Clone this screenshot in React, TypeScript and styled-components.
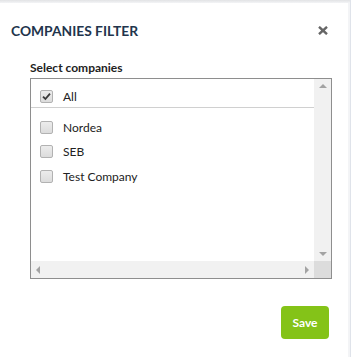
import React, { useState } from 'react'
import styled, { createGlobalStyle } from 'styled-components'

const GlobalStyle = createGlobalStyle`
  html, body {
    margin: 0;
    padding: 0;
    background: #eef0f3;
    font-family: Lato, "Open Sans", Arial, sans-serif;
  }
`

const Page = styled.div`
  width: 351px;
  height: 357px;
  display: flex;
  background: linear-gradient(to bottom, #e2e3e5 0px, #f3f4f6 3px, #f3f4f6 100%);
  border-right: 1px solid #dfe3ea;
  box-sizing: border-box;
  overflow: hidden;
`

const Modal = styled.div`
  width: 348px;
  margin-top: 3px;
  background: #fff;
  box-sizing: border-box;
  display: flex;
  flex-direction: column;
`

const Header = styled.div`
  display: flex;
  align-items: center;
  justify-content: space-between;
  height: 55px;
  padding: 0 20px 0 11px;
`

const Title = styled.h4`
  margin: 0;
  font-size: 13.8px;
  font-weight: 700;
  color: #22344c;
`

const Close = styled.button`
  border: 0;
  background: none;
  padding: 0;
  display: flex;
  cursor: pointer;
`

const Body = styled.div`
  padding: 2px 0 0 30px;
`

const Label = styled.div`
  font-size: 12px;
  font-weight: 700;
  color: #222;
  margin-bottom: 3px;
`

const ListBox = styled.div`
  width: 302px;
  height: 201px;
  box-sizing: border-box;
  border: 1px solid #8e8e8e;
  display: grid;
  grid-template-columns: 1fr 17px;
  grid-template-rows: 1fr 17px;
`

const Options = styled.div`
  padding-top: 7px;
`

const OptionRow = styled.label<{ $divider?: boolean }>`
  display: flex;
  align-items: center;
  height: 24.5px;
  padding-left: 9px;
  font-size: 12px;
  color: #222;
  cursor: pointer;
  ${({ $divider }) =>
    $divider &&
    `
    border-bottom: 1px solid #d0d0d0;
    margin-bottom: 7px;
    height: 20px;
    padding-bottom: 1px;
  `}
`

const Box = styled.span`
  width: 11px;
  height: 11px;
  border: 1px solid #b2b2b2;
  border-radius: 2px;
  background: linear-gradient(#ececec, #dcdcdc);
  margin-right: 10px;
  display: flex;
  align-items: center;
  justify-content: center;
  flex-shrink: 0;
`

const ScrollTrack = styled.div<{ $dir: 'v' | 'h' }>`
  background: #f1f1f1;
  display: flex;
  flex-direction: ${({ $dir }) => ($dir === 'v' ? 'column' : 'row')};
  justify-content: space-between;
  align-items: center;
  padding: ${({ $dir }) => ($dir === 'v' ? '5px 0' : '0 5px')};
`

const Corner = styled.div`
  background: #dcdcdc;
`

const Arrow = styled.span<{ $dir: 'up' | 'down' | 'left' | 'right' }>`
  width: 0;
  height: 0;
  border: 4px solid transparent;
  ${({ $dir }) =>
    $dir === 'up'
      ? 'border-bottom-color: #a3a3a3; border-top-width: 0;'
      : $dir === 'down'
      ? 'border-top-color: #a3a3a3; border-bottom-width: 0;'
      : $dir === 'left'
      ? 'border-right-color: #a3a3a3; border-left-width: 0;'
      : 'border-left-color: #a3a3a3; border-right-width: 0;'}
`

const Footer = styled.div`
  display: flex;
  justify-content: flex-end;
  padding: 27px 19px 0 0;
`

const SaveButton = styled.button`
  width: 48px;
  height: 33px;
  border: 0;
  border-radius: 4px;
  background: #84c318;
  color: #fff;
  font-family: Lato, sans-serif;
  font-size: 12px;
  font-weight: 700;
  cursor: pointer;
`

const Check = () => (
  <svg width="9" height="9" viewBox="0 0 9 9">
    <path d="M1 4.6 L3.4 7 L8 1.6" fill="none" stroke="#3a3a3a" strokeWidth="1.8" />
  </svg>
)

const CloseIcon = () => (
  <svg width="10" height="9" viewBox="0 0 10 9">
    <path d="M1 0.8 L9 8.2 M9 0.8 L1 8.2" stroke="#666" strokeWidth="2.4" strokeLinecap="butt" />
  </svg>
)

const companies = ['Nordea', 'SEB', 'Test Company']

export default function App() {
  const [selected, setSelected] = useState<string[]>([])
  const [all, setAll] = useState(true)

  const toggle = (name: string) =>
    setSelected(s => (s.includes(name) ? s.filter(x => x !== name) : [...s, name]))

  return (
    <>
      <GlobalStyle />
      <Page>
        <Modal>
          <Header>
            <Title>COMPANIES FILTER</Title>
            <Close aria-label="Close">
              <CloseIcon />
            </Close>
          </Header>
          <Body>
            <Label>Select companies</Label>
            <ListBox>
              <Options>
                <OptionRow $divider onClick={() => setAll(a => !a)}>
                  <Box>{all && <Check />}</Box>
                  All
                </OptionRow>
                {companies.map(c => (
                  <OptionRow key={c} onClick={() => toggle(c)}>
                    <Box>{selected.includes(c) && <Check />}</Box>
                    {c}
                  </OptionRow>
                ))}
              </Options>
              <ScrollTrack $dir="v">
                <Arrow $dir="up" />
                <Arrow $dir="down" />
              </ScrollTrack>
              <ScrollTrack $dir="h">
                <Arrow $dir="left" />
                <Arrow $dir="right" />
              </ScrollTrack>
              <Corner />
            </ListBox>
          </Body>
          <Footer>
            <SaveButton>Save</SaveButton>
          </Footer>
        </Modal>
      </Page>
    </>
  )
}
